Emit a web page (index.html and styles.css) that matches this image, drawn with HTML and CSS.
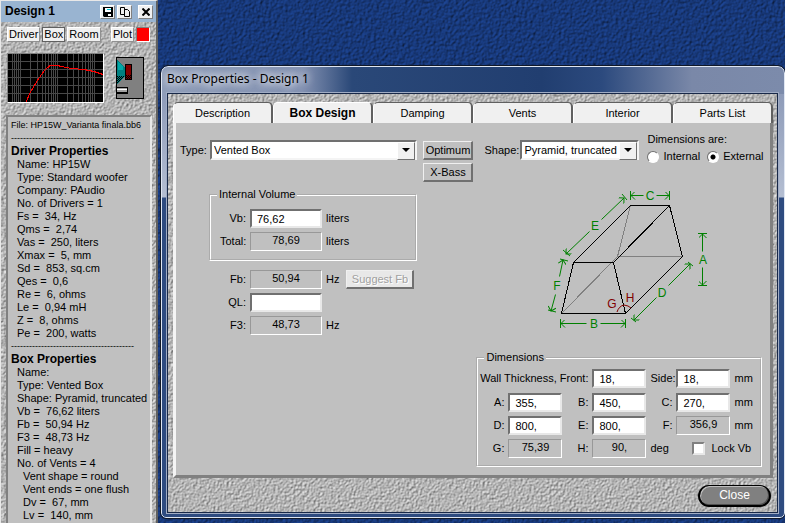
FILE: index.html
```html
<!DOCTYPE html>
<html lang="en">
<head>
<meta charset="utf-8">
<title>Box Properties - Design 1</title>
<link rel="stylesheet" href="styles.css">
</head>
<body>
<div class="desktop">
  <aside class="summary rock">
    <header class="summary-title">
      <h2>Design 1</h2>
      <button class="tool" aria-label="Save"><svg width="10" height="10"><path d="M0 0h10v10H1L0 9z" fill="#000"/><path d="M2 1h6v4H2z" fill="#fff"/><path d="M4 2h4v1H4z" fill="#00c8d8"/><path d="M3 7h5v2H3z" fill="#fff"/><path d="M3 7h2v2H3z" fill="#000"/></svg></button>
      <button class="tool" aria-label="Copy"><svg width="10" height="10" fill="#f0f0f0" stroke="#000"><path d="M.5.5h4v7h-4z"/><path d="M4.500 2.500h3l2 2v5h-5z"/></svg></button>
      <button class="tool tool-close" aria-label="Close design"><svg width="8" height="8" stroke="#000" stroke-width="2"><path d="M.5.5l7 7M7.500 .5l-7 7"/></svg></button>
    </header>
    <nav class="summary-nav">
      <button>Driver</button><button class="pressed">Box</button><button>Room</button><button class="plot">Plot</button><button class="swatch" aria-label="Plot color"></button>
    </nav>
    <div class="previews">
      <svg class="graph" width="95" height="48" shape-rendering="crispEdges" role="img" aria-label="Frequency response">
        <path d="M0 0h95v48H0z" fill="#000"/>
        <path d="M4.500 0v48M6.500 0v48M8.500 0v48M10.500 0v48M12.500 0v48M22.500 0v48M29.500 0v48M34.500 0v48M37.500 0v48M40.500 0v48M43.500 0v48M45.500 0v48M47.500 0v48M49.500 0v48M59.500 0v48M65.500 0v48M70.500 0v48M74.500 0v48M77.500 0v48M80.500 0v48M82.500 0v48M84.500 0v48M86.500 0v48M0 7.500h95M0 15.500h95M0 23.500h95M0 31.500h95M0 39.500h95" stroke="#484848" fill="none"/>
        <path d="M18 48L22 39 29 27 36 17 42 11.500h7l5 1 9 2 13 1 10 2 9 3" stroke="#f00" fill="none"/>
      </svg>
      <svg class="cabinet" width="28" height="42" shape-rendering="crispEdges" role="img" aria-label="Vented box">
        <defs><pattern id="check" width="2" height="2" patternUnits="userSpaceOnUse"><path d="M0 0h1v1H0zM1 1h1v1H1z" fill="#000"/></pattern></defs>
        <path d="M.5.5h27v41H.5z" fill="#808080" stroke="#000"/>
        <path d="M1 3l8 8v8l-8 9z" fill="#008080"/><path d="M2 5l5 5v3H2z" fill="#00a8a8"/><path d="M1 19h8l-8 9z" fill="url(#check)"/>
        <path d="M9.500 7.500h6v15h-6z" fill="#800000" stroke="#000"/><path d="M10 18h6v5h-6z" fill="url(#check)"/>
        <path d="M1 30h11v7H1z" fill="#000"/><path d="M1 31h10v4H1z" fill="#a0a0a0"/><path d="M1 32h10v1H1z" fill="#fff"/>
      </svg>
    </div>
    <section class="report">
      <p class="file">File: HP15W_Varianta finala.bb6</p>
      <p class="rule">-----------------------------------------</p>
      <h3>Driver Properties</h3>
      <ul>
        <li>Name: HP15W</li><li>Type: Standard woofer</li><li>Company: PAudio</li><li>No. of Drivers = 1</li><li>Fs =&nbsp; 34, Hz</li><li>Qms =&nbsp; 2,74</li><li>Vas =&nbsp; 250, liters</li><li>Xmax =&nbsp; 5, mm</li><li>Sd =&nbsp; 853, sq.cm</li><li>Qes =&nbsp; 0,6</li><li>Re =&nbsp; 6, ohms</li><li>Le =&nbsp; 0,94 mH</li><li>Z =&nbsp; 8, ohms</li><li>Pe =&nbsp; 200, watts</li>
      </ul>
      <p class="rule">-----------------------------------------</p>
      <h3>Box Properties</h3>
      <ul>
        <li>Name:</li><li>Type: Vented Box</li><li>Shape: Pyramid, truncated</li><li>Vb =&nbsp; 76,62 liters</li><li>Fb =&nbsp; 50,94 Hz</li><li>F3 =&nbsp; 48,73 Hz</li><li>Fill = heavy</li>
        <li>No. of Vents = 4
          <ul><li>Vent shape = round</li><li>Vent ends = one flush</li><li>Dv =&nbsp; 67, mm</li><li>Lv =&nbsp; 140, mm</li></ul>
        </li>
      </ul>
    </section>
  </aside>

  <main class="dialog">
    <h1><span>Box Properties - Design 1</span></h1>
    <div class="client rock">
      <div class="tabs" role="tablist">
        <button role="tab">Description</button><button role="tab" class="active" aria-selected="true">Box Design</button><button role="tab">Damping</button><button role="tab">Vents</button><button role="tab">Interior</button><button role="tab">Parts List</button>
      </div>
      <div class="page">
        <section class="left">
          <div class="type-row">
            <label for="type">Type:</label>
            <span class="combo"><select id="type"><option>Vented Box</option></select></span>
            <div class="stack"><button class="btn">Optimum</button><button class="btn">X-Bass</button></div>
          </div>
          <fieldset class="volume">
            <legend>Internal Volume</legend>
            <div class="line"><label for="vb">Vb:</label><input id="vb" value="76,62"><span>liters</span></div>
            <div class="line"><label for="total">Total:</label><output id="total">78,69</output><span>liters</span></div>
          </fieldset>
          <div class="tuning">
            <div class="line"><label for="fb">Fb:</label><output id="fb">50,94</output><span>Hz</span><button class="btn suggest" disabled>Suggest Fb</button></div>
            <div class="line"><label for="ql">QL:</label><input id="ql"></div>
            <div class="line"><label for="f3">F3:</label><output id="f3">48,73</output><span>Hz</span></div>
          </div>
        </section>
        <section class="right">
          <div class="shape-row">
            <label for="shape">Shape:</label>
            <span class="combo"><select id="shape"><option>Pyramid, truncated</option></select></span>
            <div class="measure" role="radiogroup" aria-labelledby="measure-title">
              <span id="measure-title">Dimensions are:</span>
              <div><input type="radio" name="measure" id="internal"><label for="internal">Internal</label><input type="radio" name="measure" id="external" checked><label for="external">External</label></div>
            </div>
          </div>
          <svg class="drawing" width="180" height="150" viewBox="540 185 180 150" role="img" aria-label="Truncated pyramid with dimensions A to H">
            <defs><marker id="arrow" viewBox="0 0 8 8" refX="7" refY="4" markerWidth="8" markerHeight="8" orient="auto" markerUnits="userSpaceOnUse"><path d="M3 0l4 4-4 4" fill="none" stroke="#008000"/></marker></defs>
            <g fill="none" shape-rendering="crispEdges">
              <path d="M561.500 313.500L617.500 256.500M630.500 205.500L617.500 256.500H682.500" stroke="#808080"/>
              <path d="M561.500 313.500L573.500 262.500H613.500L625.500 313.500zM573.500 262.500L630.500 205.500H669.500L613.500 262.500M669.500 205.500L682.500 256.500L625.500 313.500" stroke="#000"/>
            </g>
            <g stroke="#008000" fill="none">
              <path d="M630.500 191v9M669.500 191v9M560.500 319v9M625.500 319v9M698 233.500h9M698 285.500h9M622 194l5 6M563 250l7 6M688 262l5 4M631 318l5 4M560 259l8 2M548 310l8 2"/>
              <g marker-end="url(#arrow)">
                <path d="M643.500 195.500H631"/><path d="M656.500 195.500H669"/><path d="M586.500 323.500H561"/><path d="M600.500 323.500H625"/><path d="M702.500 251.500V234"/><path d="M702.500 267.500V285"/><path d="M589.500 231.500L566 254"/><path d="M601.500 219.500L624 198"/><path d="M559.500 276.500L563 260"/><path d="M555.500 294.500L551 311"/><path d="M668.500 285.500L690 264"/><path d="M656.500 297.500L634 320"/>
              </g>
            </g>
            <path d="M617 312q2-6 7-7l4 1 3 2" fill="none" stroke="#800000"/>
            <g class="mark"><text x="650" y="200">C</text><text x="594" y="328">B</text><text x="703" y="264">A</text><text x="595" y="230">E</text><text x="662" y="297">D</text><text x="557" y="290">F</text></g>
            <g class="mark mark-angle"><text x="612" y="308">G</text><text x="630" y="302">H</text></g>
          </svg>
          <fieldset class="dims">
            <legend>Dimensions</legend>
            <div class="dims-grid">
              <label class="wide" for="front">Wall Thickness, Front:</label><input id="front" value="18,"><label for="side">Side:</label><input id="side" value="18,"><span>mm</span>
              <label for="a">A:</label><input id="a" value="355,"><label for="b">B:</label><input id="b" value="450,"><label for="c">C:</label><input id="c" value="270,"><span>mm</span>
              <label for="d">D:</label><input id="d" value="800,"><label for="e">E:</label><input id="e" value="800,"><label for="f">F:</label><output id="f">356,9</output><span>mm</span>
              <label for="g">G:</label><output id="g">75,39</output><label for="h">H:</label><output id="h">90,</output><span>deg</span><div class="lock"><input type="checkbox" id="lock"><label for="lock">Lock Vb</label></div>
            </div>
          </fieldset>
        </section>
      </div>
      <footer><button class="close">Close</button></footer>
    </div>
  </main>
</div>
</body>
</html>
```
FILE: styles.css
```css
* { box-sizing: border-box; }
body { margin: 0; font: 11px/13px "Liberation Sans", Arial, sans-serif; color: #000; }
h1, h2, h3, p, ul { margin: 0; padding: 0; list-style: none; }
button, input, select { font: inherit; color: inherit; margin: 0; padding: 0; }

.desktop {
  display: flex; gap: 3px; height: 100vh; overflow: hidden;
  background: #173c86 url("data:image/svg+xml,%3Csvg xmlns='http://www.w3.org/2000/svg' width='256' height='256'%3E%3Cfilter id='n' x='0' y='0' width='100%25' height='100%25' color-interpolation-filters='sRGB'%3E%3CfeTurbulence type='fractalNoise' baseFrequency='.35' numOctaves='3' stitchTiles='stitch'/%3E%3CfeDiffuseLighting surfaceScale='1' lighting-color='%231f4a9f'%3E%3CfeDistantLight azimuth='225' elevation='50'/%3E%3C/feDiffuseLighting%3E%3C/filter%3E%3Crect width='256' height='256' filter='url(%23n)'/%3E%3C/svg%3E");
}
.rock {
  background: #b4b4b4 url("data:image/svg+xml,%3Csvg xmlns='http://www.w3.org/2000/svg' width='256' height='256'%3E%3Cfilter id='n' x='0' y='0' width='100%25' height='100%25' color-interpolation-filters='sRGB'%3E%3CfeTurbulence type='fractalNoise' baseFrequency='.45' numOctaves='2' stitchTiles='stitch'/%3E%3CfeDiffuseLighting surfaceScale='.8' diffuseConstant='1' lighting-color='%23ffffff'%3E%3CfeDistantLight azimuth='225' elevation='45'/%3E%3C/feDiffuseLighting%3E%3C/filter%3E%3Crect width='256' height='256' filter='url(%23n)'/%3E%3C/svg%3E");
}

/* Design summary window */
.summary { flex: 0 0 158px; min-width: 0; display: flex; flex-direction: column; border: 1px solid #e8e8e8; border-right: 2px solid #606060; border-bottom: 0; }
.summary-title { display: flex; align-items: center; gap: 2px; height: 21px; padding: 0 3px 0 4px; background: #99b4d1; }
.summary-title h2 { flex: 1; font: bold 12px/13px "Liberation Sans", sans-serif; }
.tool { display: flex; align-items: center; justify-content: center; width: 15px; height: 14px; background: #f0f0f0; border: 1px solid #fff; border-right-color: #808080; border-bottom-color: #808080; }
.tool-close { margin-left: 4px; }
.summary-nav { display: flex; gap: 2px; padding: 5px 6px 0; }
.summary-nav button { flex: 0 0 auto; height: 15px; padding: 0 1px; line-height: 13px; background: #f0f0f0; border: 1px solid #fff; border-right-color: #909090; border-bottom-color: #909090; }
.summary-nav .pressed { border-color: #606060; }
.summary-nav .plot { margin-left: auto; }
.summary-nav .swatch { width: 14px; background: #f00; border-color: #808080 #fff #fff #808080; }
.previews { display: flex; justify-content: space-between; padding: 11px 12px 0 6px; }
.graph { box-sizing: content-box; border: 1px solid #808080; border-right-color: #fff; border-bottom-color: #fff; }
.cabinet { margin-top: 4px; }
.report { flex: 1; min-height: 0; overflow: hidden; white-space: nowrap; margin: 12px 4px 0 5px; padding: 2px 3px; background: #c0c0c0; border: 2px solid #808080; border-right-color: #e8e8e8; border-bottom: 0; }
.report h3 { font: bold 12px/13px "Liberation Sans", sans-serif; }
.report ul { padding-left: 6px; }
.file, .rule { font-size: 9px; }

/* Box properties window */
.dialog { flex: 1; min-width: 0; display: flex; flex-direction: column; align-self: flex-start; margin-top: 66px; padding: 0 6px 4px 5px; border: 1px solid #dfe6f2; outline: 1px solid #101828; border-radius: 7px 7px 5px 5px; background: linear-gradient(90deg, #8f9db8 0, #8492b2 140px, #2a4878 190px, #213e70 380px, #2c4a7e 440px, #7a88a8 530px, #7c8bab 100%) 0 0 / 100% 27px no-repeat, linear-gradient(#8492b2 0, #b4bed2 130px, #2e4b80 131px, #2e4b80 100%); }
.dialog h1 { height: 26px; font: 12px/24px "Noto Sans", sans-serif; }
.dialog h1 span { text-shadow: 0 0 8px #fff, 0 0 8px #fff; }
.client { border: 1px solid #182848; padding: 8px 4px 5px 5px; box-shadow: 0 0 0 1px #a0acc4; }
.tabs { display: grid; grid-template-columns: repeat(6, 1fr); height: 18px; }
.tabs button { background: #f0f0f0; border: 1px solid #fff; border-right: 2px solid #606060; border-top-color: #606060; border-bottom: 0; border-radius: 5px 5px 0 0; }
.tabs .active { font-size: 12px; font-weight: 700; height: 21px; position: relative; border-top-color: #fff; }
.page { display: grid; grid-template-columns: minmax(0, 301fr) minmax(286px, 294fr); background: #c0c0c0; border: 3px solid #f4f4f4; border-right: 3px solid #808080; border-bottom: 3px solid #808080; padding-bottom: 8px; }
.left { padding: 17px 3px 0 4px; }
.type-row { display: flex; gap: 4px; }
.type-row label { width: 26px; padding-top: 4px; white-space: nowrap; }
.combo { position: relative; flex: none; height: 20px; border: 2px solid #707070; border-right-color: #f4f4f4; border-bottom-color: #f4f4f4; background: #fff; }
.type-row .combo { flex: 1; }
.combo select { appearance: none; width: 100%; height: 16px; padding: 0 16px 0 2px; background: none; border: 0; outline: 0; }
.combo::before { content: ""; position: absolute; right: 0; top: 0; width: 16px; height: 16px; background: #f0f0f0; border: 1px solid #fff; border-right-color: #707070; border-bottom-color: #707070; }
.combo::after { content: ""; position: absolute; right: 5px; top: 6px; border: 4px solid transparent; border-top-color: #000; border-bottom: 0; }
.stack { display: flex; flex-direction: column; gap: 3px; padding: 1px 0 0 2px; }
.btn { width: 50px; height: 19px; background: #c0c0c0; border: 1px solid #f0f0f0; border-right: 2px solid #707070; border-bottom: 2px solid #707070; white-space: nowrap; }
fieldset { margin: 0; min-width: 0; padding: 0; border: 2px groove #fff; }
legend { padding: 0 2px; margin-left: 6px; }
.volume { margin: 6px 56px 0 29px; padding: 8px 0; }
.volume .line { margin-left: 9px; }
.line { display: flex; align-items: center; gap: 4px; height: 19px; }
.line + .line { margin-top: 4px; }
.line label { width: 26px; text-align: right; white-space: nowrap; }
.line input, .line output { width: 72px; }
input:not([type]), output { min-width: 0; height: 19px; border: 2px solid #707070; border-right-color: #e8e8e8; border-bottom-color: #e8e8e8; background: #fff; padding-left: 5px; }
output { text-align: center; background: #c0c0c0; border-width: 1px; border-color: #989898 #fff #fff #989898; padding: 1px 0 0; }
.tuning { margin: 9px 0 0 40px; }
.suggest { width: 68px; margin-left: 3px; color: #a0a0a0; background: #e8e8e8; text-shadow: 1px 1px #fff; }

.right { display: flex; flex-direction: column; padding-right: 8px; }
.shape-row { display: flex; gap: 4px; padding: 10px 0 0 8px; white-space: nowrap; }
.shape-row > label { width: 32px; margin-top: 11px; }
.shape-row .combo { width: 119px; margin-top: 7px; }
.measure { margin-left: 4px; }
.measure div { display: flex; align-items: center; gap: 4px; margin-top: 4px; }
.measure label + input { margin-left: 3px; }
[type="radio"] { appearance: none; width: 12px; height: 12px; border: 1px solid #707070; border-right-color: #fff; border-bottom-color: #fff; border-radius: 50%; background: #fff; }
[type="radio"]:checked { background: radial-gradient(circle, #000 2px, #fff 3px); }
.drawing { align-self: flex-end; margin: 22px 42px 16px 0; }
.mark { font-size: 12px; fill: #008000; text-anchor: middle; }
.mark-angle { fill: #800000; }
.dims { padding: 4px 0 7px; }
.dims-grid { display: grid; grid-template: 21px 19px 19px 19px / 26px 54px 22px 54px 22px 54px auto; column-gap: 4px; row-gap: 4px; align-items: center; justify-content: start; }
.dims-grid label { text-align: right; white-space: nowrap; }
.dims-grid .wide { grid-column: span 3; }
.lock { grid-column: span 2; display: flex; align-items: center; gap: 6px; margin-left: 16px; }
[type="checkbox"] { appearance: none; width: 13px; height: 13px; background: #fff; border: 2px solid #808080; border-right-color: #e8e8e8; border-bottom-color: #e8e8e8; }
footer { display: flex; justify-content: flex-end; padding: 7px 2px 0 0; }
.close { width: 73px; height: 22px; border: 2px solid #000; border-top-width: 1px; border-radius: 11px; background: #808080; color: #fff; font-size: 12px; box-shadow: inset 1px 1px #c0c0c0, inset -1px -1px #505050; }
```
